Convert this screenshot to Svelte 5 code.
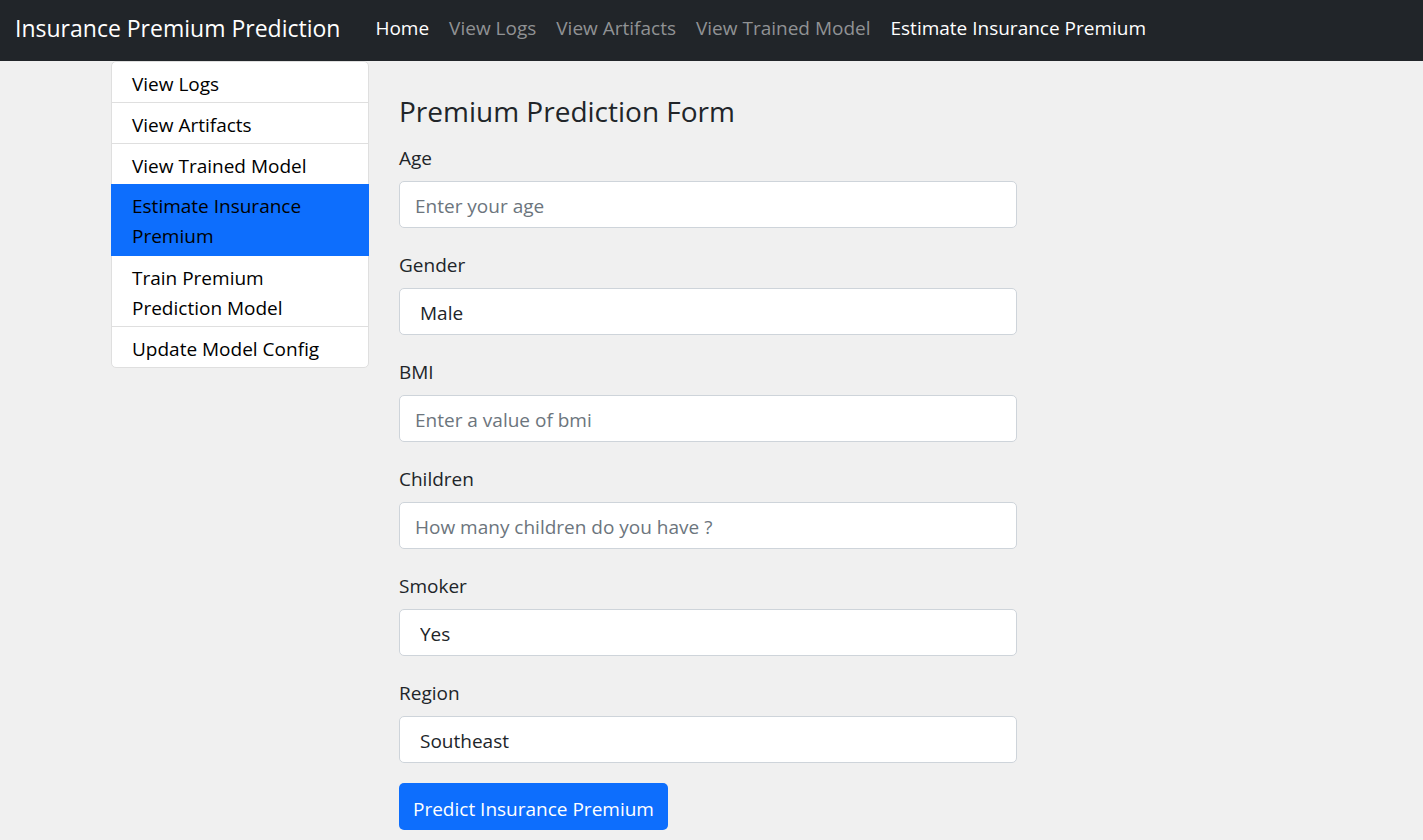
<script>
  const navItems = [
    { label: 'Home', active: true },
    { label: 'View Logs', active: false },
    { label: 'View Artifacts', active: false },
    { label: 'View Trained Model', active: false },
    { label: 'Estimate Insurance Premium', active: true }
  ];
  const menuItems = [
    'View Logs',
    'View Artifacts',
    'View Trained Model',
    'Estimate Insurance Premium',
    'Train Premium Prediction Model',
    'Update Model Config'
  ];
  const current = 'Estimate Insurance Premium';
  const fields = [
    { id: 'age', label: 'Age', placeholder: 'Enter your age' },
    { id: 'gender', label: 'Gender', options: ['Male', 'Female'] },
    { id: 'bmi', label: 'BMI', placeholder: 'Enter a value of bmi' },
    { id: 'children', label: 'Children', placeholder: 'How many children do you have ?' },
    { id: 'smoker', label: 'Smoker', options: ['Yes', 'No'] },
    { id: 'region', label: 'Region', options: ['Southeast', 'Southwest', 'Northeast', 'Northwest'] }
  ];
</script>

<header>
  <a class="brand" href="#home">Insurance Premium Prediction</a>
  <nav>
    {#each navItems as item}
      <a href="#nav" class:active={item.active}>{item.label}</a>
    {/each}
  </nav>
</header>

<div class="page">
  <aside>
    <ul>
      {#each menuItems as item}
        <li class:current={item === current}><a href="#menu">{item}</a></li>
      {/each}
    </ul>
  </aside>
  <main>
    <h1>Premium Prediction Form</h1>
    <form onsubmit={(e) => e.preventDefault()}>
      {#each fields as field}
        <div class="field">
          <label for={field.id}>{field.label}</label>
          {#if field.options}
            <select id={field.id}>
              {#each field.options as option}
                <option>{option}</option>
              {/each}
            </select>
          {:else}
            <input id={field.id} type="text" placeholder={field.placeholder} />
          {/if}
        </div>
      {/each}
      <button type="submit">Predict Insurance Premium</button>
    </form>
  </main>
</div>

<style>
  :global(body) {
    margin: 0;
    background: #f0f0f0;
    color: #212529;
    font: 19px/30px "Segoe UI", "Open Sans", "Noto Sans", sans-serif;
  }
  :global(*) {
    box-sizing: border-box;
  }
  a {
    color: inherit;
    text-decoration: none;
  }
  header {
    display: flex;
    align-items: center;
    gap: 35px;
    min-height: 61px;
    padding: 0 15px 5px;
    background: #212529;
    color: #fff;
  }
  .brand {
    font-size: 23px;
    white-space: nowrap;
  }
  nav {
    display: flex;
    gap: 20px;
    color: #909294;
    white-space: nowrap;
  }
  nav a.active {
    color: #fff;
  }
  .page {
    display: grid;
    grid-template-columns: 258px minmax(0, 618px);
    gap: 30px;
    align-items: start;
    max-width: 1201px;
    margin: 0 auto;
  }
  ul {
    margin: 0;
    padding: 0;
    list-style: none;
    background: #fff;
    border: 1px solid #dfdfdf;
    border-radius: 5px;
    color: #000;
  }
  li {
    padding: 7px 20px 3px;
  }
  li + li {
    border-top: 1px solid #dfdfdf;
  }
  li.current {
    margin: 0 -1px;
    padding: 6px 21px 5px;
    border-color: #0d6efd;
    background: #0d6efd;
  }
  li.current + li {
    border-top: 0;
  }
  li a {
    display: block;
  }
  h1 {
    margin: 32px 0 14px;
    font-size: 28px;
    font-weight: 400;
    line-height: 36px;
  }
  .field {
    margin-bottom: 20px;
  }
  .field + .field {
    padding-top: 2px;
  }
  label {
    display: block;
    margin-bottom: 8px;
  }
  input,
  select {
    display: block;
    width: 100%;
    height: 47px;
    padding: 8px 15px 6px;
    border: 1px solid #ced4da;
    border-radius: 5px;
    background: #fff;
    color: #212529;
    font: inherit;
    appearance: none;
  }
  select {
    padding: 8px 20px 6px;
  }
  input::placeholder {
    color: #6c757d;
    opacity: 1;
  }
  button {
    height: 47px;
    padding: 4px 14px 0;
    border: 0;
    border-radius: 5px;
    background: #0d6efd;
    color: #fff;
    font: inherit;
  }
</style>
